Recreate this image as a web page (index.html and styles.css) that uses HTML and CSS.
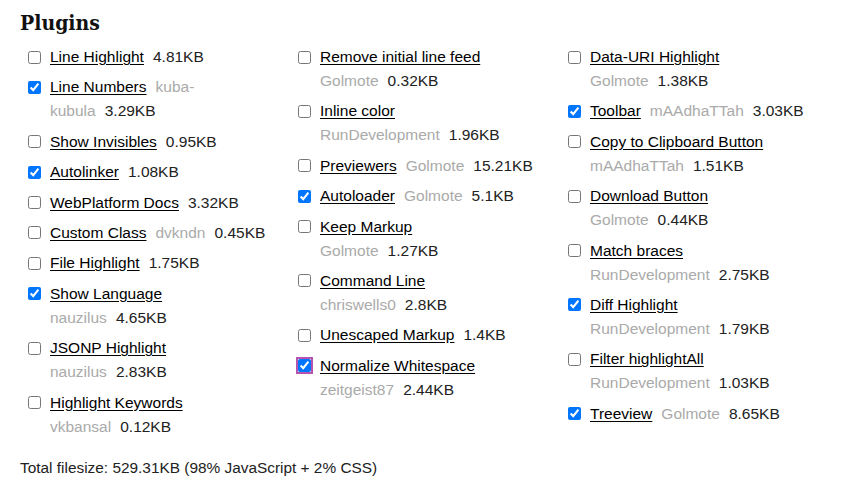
FILE: index.html
```html
<!DOCTYPE html>
<html>
<head>
<meta charset="utf-8">
<link rel="stylesheet" href="styles.css">
</head>
<body>
<div class="page">
  <h2 class="title">Plugins</h2>
  <div class="cols">
    <ul class="col">
      <li class="item"><input type="checkbox" class="cb"><span class="txt"><a class="name">Line Highlight</a> <b class="size">4.81KB</b></span></li>
      <li class="item"><input type="checkbox" class="cb" checked><span class="txt"><a class="name">Line Numbers</a> <span class="owner">kuba-</span><span class="owner">kubula</span>&nbsp;<b class="size">3.29KB</b></span></li>
      <li class="item"><input type="checkbox" class="cb"><span class="txt"><a class="name">Show Invisibles</a> <b class="size">0.95KB</b></span></li>
      <li class="item"><input type="checkbox" class="cb" checked><span class="txt"><a class="name">Autolinker</a> <b class="size">1.08KB</b></span></li>
      <li class="item"><input type="checkbox" class="cb"><span class="txt"><a class="name">WebPlatform Docs</a> <b class="size">3.32KB</b></span></li>
      <li class="item"><input type="checkbox" class="cb"><span class="txt"><a class="name">Custom Class</a> <span class="owner">dvkndn</span>&nbsp;<b class="size">0.45KB</b></span></li>
      <li class="item"><input type="checkbox" class="cb"><span class="txt"><a class="name">File Highlight</a> <b class="size">1.75KB</b></span></li>
      <li class="item"><input type="checkbox" class="cb" checked><span class="txt"><a class="name">Show Language</a> <span class="owner">nauzilus</span>&nbsp;<b class="size">4.65KB</b></span></li>
      <li class="item"><input type="checkbox" class="cb"><span class="txt"><a class="name">JSONP Highlight</a> <span class="owner">nauzilus</span>&nbsp;<b class="size">2.83KB</b></span></li>
      <li class="item"><input type="checkbox" class="cb"><span class="txt"><a class="name">Highlight Keywords</a> <span class="owner">vkbansal</span>&nbsp;<b class="size">0.12KB</b></span></li>
    </ul>
    <ul class="col">
      <li class="item"><input type="checkbox" class="cb"><span class="txt"><a class="name">Remove initial line feed</a> <span class="owner">Golmote</span>&nbsp;<b class="size">0.32KB</b></span></li>
      <li class="item"><input type="checkbox" class="cb"><span class="txt"><a class="name">Inline color</a> <span class="owner">RunDevelopment</span>&nbsp;<b class="size">1.96KB</b></span></li>
      <li class="item"><input type="checkbox" class="cb"><span class="txt"><a class="name">Previewers</a> <span class="owner">Golmote</span>&nbsp;<b class="size">15.21KB</b></span></li>
      <li class="item"><input type="checkbox" class="cb" checked><span class="txt"><a class="name">Autoloader</a> <span class="owner">Golmote</span>&nbsp;<b class="size">5.1KB</b></span></li>
      <li class="item"><input type="checkbox" class="cb"><span class="txt"><a class="name">Keep Markup</a> <span class="owner">Golmote</span>&nbsp;<b class="size">1.27KB</b></span></li>
      <li class="item"><input type="checkbox" class="cb"><span class="txt"><a class="name">Command Line</a> <span class="owner">chriswells0</span>&nbsp;<b class="size">2.8KB</b></span></li>
      <li class="item"><input type="checkbox" class="cb"><span class="txt"><a class="name">Unescaped Markup</a> <b class="size">1.4KB</b></span></li>
      <li class="item"><input type="checkbox" class="cb focus" checked><span class="txt"><a class="name">Normalize Whitespace</a> <span class="owner">zeitgeist87</span>&nbsp;<b class="size">2.44KB</b></span></li>
    </ul>
    <ul class="col">
      <li class="item"><input type="checkbox" class="cb"><span class="txt"><a class="name">Data-URI Highlight</a> <span class="owner">Golmote</span>&nbsp;<b class="size">1.38KB</b></span></li>
      <li class="item"><input type="checkbox" class="cb" checked><span class="txt"><a class="name">Toolbar</a> <span class="owner">mAAdhaTTah</span>&nbsp;<b class="size">3.03KB</b></span></li>
      <li class="item"><input type="checkbox" class="cb"><span class="txt"><a class="name">Copy to Clipboard Button</a> <span class="owner">mAAdhaTTah</span>&nbsp;<b class="size">1.51KB</b></span></li>
      <li class="item"><input type="checkbox" class="cb"><span class="txt"><a class="name">Download Button</a> <span class="owner">Golmote</span>&nbsp;<b class="size">0.44KB</b></span></li>
      <li class="item"><input type="checkbox" class="cb"><span class="txt"><a class="name">Match braces</a> <span class="owner">RunDevelopment</span>&nbsp;<b class="size">2.75KB</b></span></li>
      <li class="item"><input type="checkbox" class="cb" checked><span class="txt"><a class="name">Diff Highlight</a> <span class="owner">RunDevelopment</span>&nbsp;<b class="size">1.79KB</b></span></li>
      <li class="item"><input type="checkbox" class="cb"><span class="txt"><a class="name">Filter highlightAll</a> <span class="owner">RunDevelopment</span>&nbsp;<b class="size">1.03KB</b></span></li>
      <li class="item"><input type="checkbox" class="cb" checked><span class="txt"><a class="name">Treeview</a> <span class="owner">Golmote</span>&nbsp;<b class="size">8.65KB</b></span></li>
    </ul>
  </div>
  <p class="total">Total filesize: 529.31KB (98% JavaScript + 2% CSS)</p>
</div>
</body>
</html>
```

FILE: styles.css
```css
html, body {
  margin: 0;
  padding: 0;
  background: #fff;
}
.page {
  padding: 8px 0 0 20px;
  font-family: "Liberation Sans", Arial, sans-serif;
  color: #222;
}
.title {
  margin: 0;
  font-family: "DejaVu Serif", serif;
  font-stretch: condensed;
  font-weight: bold;
  font-size: 21px;
  line-height: 30px;
  color: #111;
}
.cols {
  display: flex;
  margin-top: 7px;
}
.col {
  list-style: none;
  margin: 0;
  padding: 0;
  width: 270px;
  flex: none;
}
.item {
  display: flex;
  align-items: flex-start;
  padding-left: 8px;
  margin-bottom: 6.4px;
  font-size: 15.5px;
  line-height: 24px;
}
.cb {
  flex: none;
  width: 13px;
  height: 13px;
  margin: 5.5px 9px 0 0;
}
.cb.focus {
  outline: 2px solid #b553ae;
  outline-offset: 0;
  border-radius: 3px;
}
.txt {
  flex: none;
  width: 217px;
  word-spacing: 4.7px;
}
.name {
  color: #000;
  word-spacing: 0;
  text-decoration: underline;
  text-underline-offset: 2px;
}
.owner {
  color: #aaa;
  word-spacing: 0;
}
.size {
  font-weight: normal;
  color: #222;
  word-spacing: 0;
}
.total {
  margin: 11px 0 0;
  font-size: 15.4px;
  line-height: 24px;
  color: #222;
}
```
